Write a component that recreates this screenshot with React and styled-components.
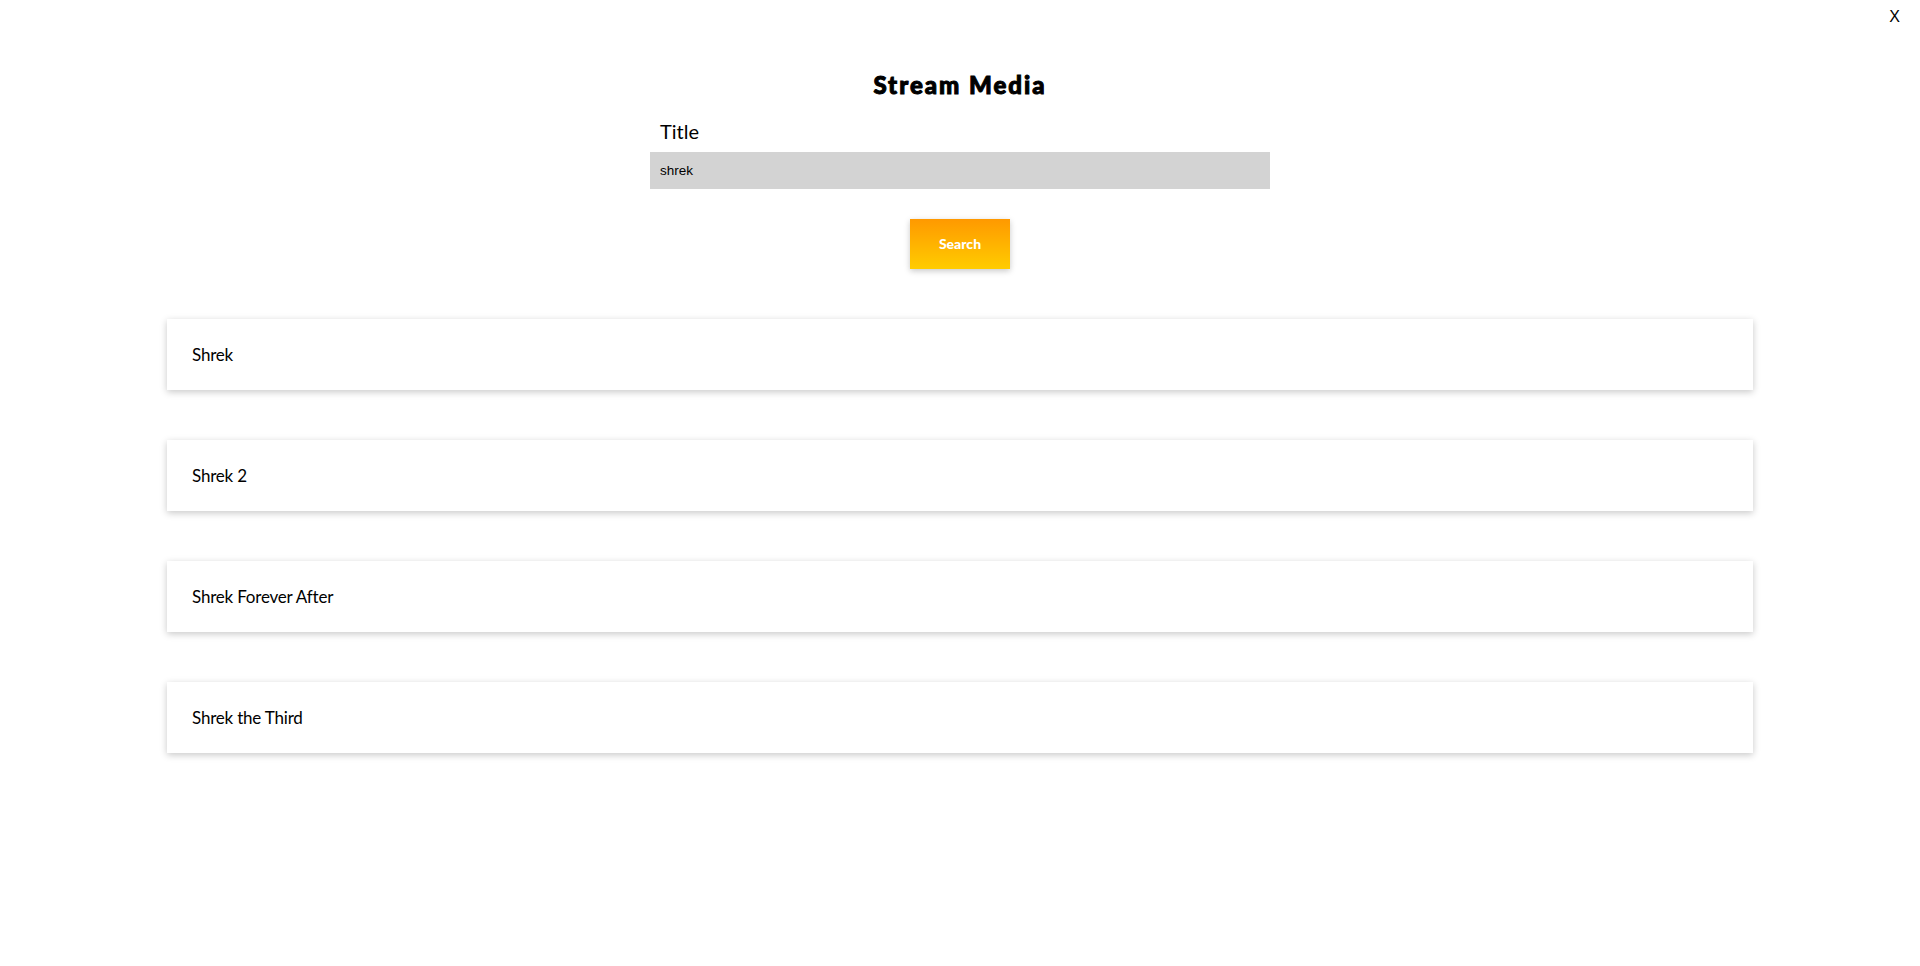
import React from "react";
import styled, { createGlobalStyle } from "styled-components";

const movies = ["Shrek", "Shrek 2", "Shrek Forever After", "Shrek the Third"];

const GlobalStyle = createGlobalStyle`
  body {
    margin: 0;
    background: #ffffff;
    font-family: Lato, "Open Sans", sans-serif;
    color: #000;
  }
`;

export default function App() {
  return (
    <>
      <GlobalStyle />
      <Page>
        <TopBar>
          <Close>X</Close>
        </TopBar>
        <Heading>Stream Media</Heading>
        <Form>
          <Label htmlFor="title">Title</Label>
          <Input id="title" defaultValue="shrek" />
        </Form>
        <SearchButton>Search</SearchButton>
        <List>
          {movies.map((m) => (
            <Card key={m}>{m}</Card>
          ))}
        </List>
      </Page>
    </>
  );
}

const Page = styled.div`
  display: flex;
  flex-direction: column;
  align-items: center;
  min-height: 966px;
`;

const TopBar = styled.div`
  align-self: stretch;
  display: flex;
  justify-content: flex-end;
  padding: 8px 20px 0;
`;

const Close = styled.span`
  font-family: "Liberation Sans", Arial, sans-serif;
  font-size: 16px;
  line-height: 18px;
  cursor: pointer;
`;

const Heading = styled.h1`
  margin: 44px 0 0;
  font-family: Lato, sans-serif;
  font-weight: 900;
  font-size: 24px;
  line-height: 29px;
  letter-spacing: 2px;
  -webkit-text-stroke: 1px #000;
`;

const Form = styled.div`
  width: 620px;
  margin-top: 20px;
  display: flex;
  flex-direction: column;
  align-items: stretch;
`;

const Label = styled.label`
  padding-left: 10px;
  font-size: 20px;
  line-height: 24px;
`;

const Input = styled.input`
  margin-top: 9px;
  height: 37px;
  box-sizing: border-box;
  border: none;
  outline: none;
  background: #d3d3d3;
  padding: 0 10px;
  font-family: "Liberation Sans", Arial, sans-serif;
  font-size: 13.5px;
  color: #000;
`;

const SearchButton = styled.button`
  margin-top: 30px;
  width: 100px;
  height: 50px;
  padding: 0 0 2px;
  border: none;
  background: linear-gradient(180deg, #ff9900 0%, #ffcc00 100%);
  box-shadow: 0 2px 6px rgba(0, 0, 0, 0.22);
  color: #fff;
  font-family: Lato, sans-serif;
  font-weight: 900;
  font-size: 14px;
  cursor: pointer;
`;

const List = styled.div`
  margin-top: 50px;
  width: 1586px;
  display: flex;
  flex-direction: column;
  gap: 50px;
`;

const Card = styled.div`
  height: 71px;
  box-sizing: border-box;
  display: flex;
  align-items: center;
  padding: 0 25px;
  background: #fff;
  box-shadow: 0 2px 7px rgba(0, 0, 0, 0.22);
  font-size: 17px;
  letter-spacing: -0.2px;
`;
